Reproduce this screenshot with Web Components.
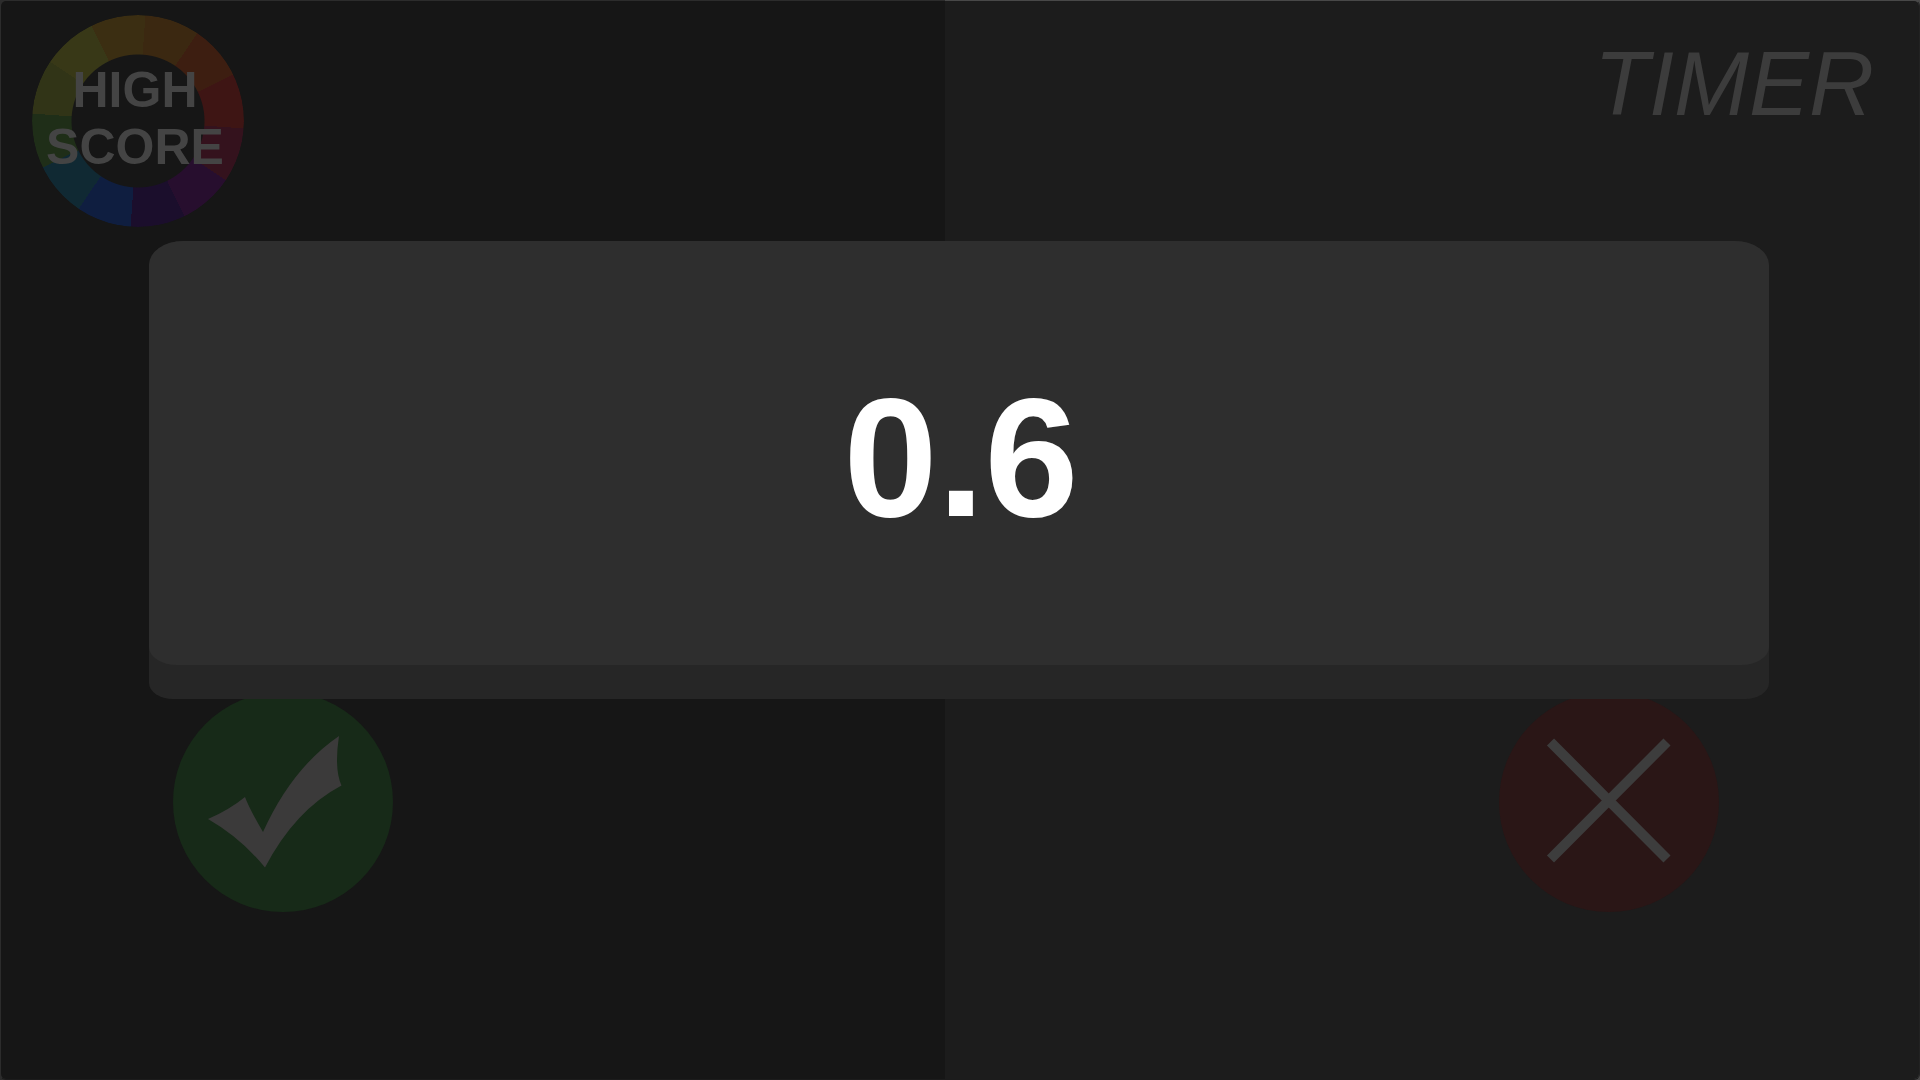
<!DOCTYPE html>
<html lang="en">
<head>
  <meta charset="utf-8">
  <title>Color Game</title>
  <style>
    body {
      margin: 0;
      background: linear-gradient(90deg, #2c2c2c 49.2%, #484848 49.2%);
      font-family: "Liberation Sans", Arial, sans-serif;
    }
  </style>
</head>
<body>
  <game-board>
    <score-badge slot="header">HIGH<br>SCORE</score-badge>
    <timer-label slot="header">TIMER</timer-label>
    <answer-button slot="answers" type="right"></answer-button>
    <answer-button slot="answers" type="wrong"></answer-button>
    <countdown-card slot="overlay">0.6</countdown-card>
  </game-board>

  <script>
    class GameBoard extends HTMLElement {
      constructor() {
        super();
        this.attachShadow({ mode: 'open' });
        this.shadowRoot.innerHTML = `
          <style>
            :host {
              display: flex;
              flex-direction: column;
              justify-content: space-between;
              position: relative;
              box-sizing: border-box;
              min-height: 100vh;
              border: 1px solid transparent;
              border-right-color: #222;
              border-bottom-color: #1c1c1c;
              border-radius: 6px;
              background: linear-gradient(90deg, #161616 49.2%, #1c1c1c 49.2%) padding-box;
            }
            header, footer {
              display: flex;
              justify-content: space-between;
            }
            header {
              padding: 14px 45px 0 31px;
            }
            footer {
              padding: 0 200px 167px 172px;
            }
            .overlay {
              position: absolute;
              inset: 0;
              padding: 240px 7.8% 0 7.7%;
            }
          </style>
          <header><slot name="header"></slot></header>
          <footer><slot name="answers"></slot></footer>
          <div class="overlay"><slot name="overlay"></slot></div>`;
      }
    }

    class ScoreBadge extends HTMLElement {
      constructor() {
        super();
        this.attachShadow({ mode: 'open' });
        this.shadowRoot.innerHTML = `
          <style>
            :host {
              display: grid;
              place-items: center;
              isolation: isolate;
              width: 212px;
              height: 212px;
              color: #444;
              font-size: 50px;
              font-weight: bold;
              line-height: 57px;
              text-align: center;
            }
            .ring, .text {
              grid-area: 1 / 1;
            }
            .ring {
              width: 100%;
              height: 100%;
              border-radius: 50%;
              background: conic-gradient(from 4deg,
                #3b2811 30deg, #3d1e11 0 60deg, #3e1514 0 90deg,
                #34121d 0 120deg, #270e2e 0 150deg, #1b0e2c 0 180deg,
                #0f1e40 0 210deg, #102933 0 240deg, #1f2e18 0 270deg,
                #313417 0 300deg, #383817 0 330deg, #3b2e12 0);
              mask: radial-gradient(circle closest-side, transparent 66px, #000 67px);
            }
            .text {
              z-index: 1;
              padding-right: 6px;
              padding-bottom: 4px;
            }
          </style>
          <div class="ring"></div>
          <div class="text"><slot></slot></div>`;
      }
    }

    class TimerLabel extends HTMLElement {
      constructor() {
        super();
        this.attachShadow({ mode: 'open' });
        this.shadowRoot.innerHTML = `
          <style>
            :host {
              display: block;
              padding-top: 24px;
              color: #3c3c3c;
              font-size: 90px;
              font-style: italic;
              line-height: 90px;
            }
          </style>
          <slot></slot>`;
      }
    }

    class AnswerButton extends HTMLElement {
      constructor() {
        super();
        this.attachShadow({ mode: 'open' });
        this.shadowRoot.innerHTML = `
          <style>
            :host {
              display: block;
            }
            button {
              display: block;
              width: 220px;
              height: 220px;
              padding: 0;
              border: 0;
              border-radius: 50%;
              background: #172a18;
              color: #3b3a3a;
              cursor: pointer;
            }
            :host([type="wrong"]) button {
              background: #2a1616;
              color: #3d3d3d;
            }
            svg {
              display: block;
            }
          </style>
          <button><svg viewBox="0 0 220 220" aria-hidden="true"></svg></button>`;
      }

      connectedCallback() {
        const right = this.getAttribute('type') === 'right';
        this.shadowRoot.querySelector('button').setAttribute('aria-label', right ? 'Right' : 'Wrong');
        this.shadowRoot.querySelector('svg').innerHTML = right
          ? '<path fill="currentColor" d="M35 127Q56 118 72 105Q76 116 90 140Q119 76 166 44Q161 77 168.500 93.500Q122 118 92 175.500Q68 146 35 127Z"/>'
          : '<path fill="none" stroke="currentColor" stroke-width="10" d="M51.500 50L168 167M168 50L51.500 167"/>';
      }
    }

    class CountdownCard extends HTMLElement {
      constructor() {
        super();
        this.attachShadow({ mode: 'open' });
        this.shadowRoot.innerHTML = `
          <style>
            :host {
              display: block;
              padding-bottom: 34px;
              border-radius: 34px 34px 24px 24px / 26px 26px 16px 16px;
              background: #262626;
            }
            .face {
              padding: 132px 0 122px 4px;
              border-radius: 34px 34px 28px 28px / 24px 24px 18px 18px;
              background: #2e2e2e;
              color: #fff;
              font-size: 169px;
              font-weight: bold;
              line-height: 170px;
              text-align: center;
            }
          </style>
          <div class="face" role="timer"><slot></slot></div>`;
      }
    }

    customElements.define('game-board', GameBoard);
    customElements.define('score-badge', ScoreBadge);
    customElements.define('timer-label', TimerLabel);
    customElements.define('answer-button', AnswerButton);
    customElements.define('countdown-card', CountdownCard);
  </script>
</body>
</html>
